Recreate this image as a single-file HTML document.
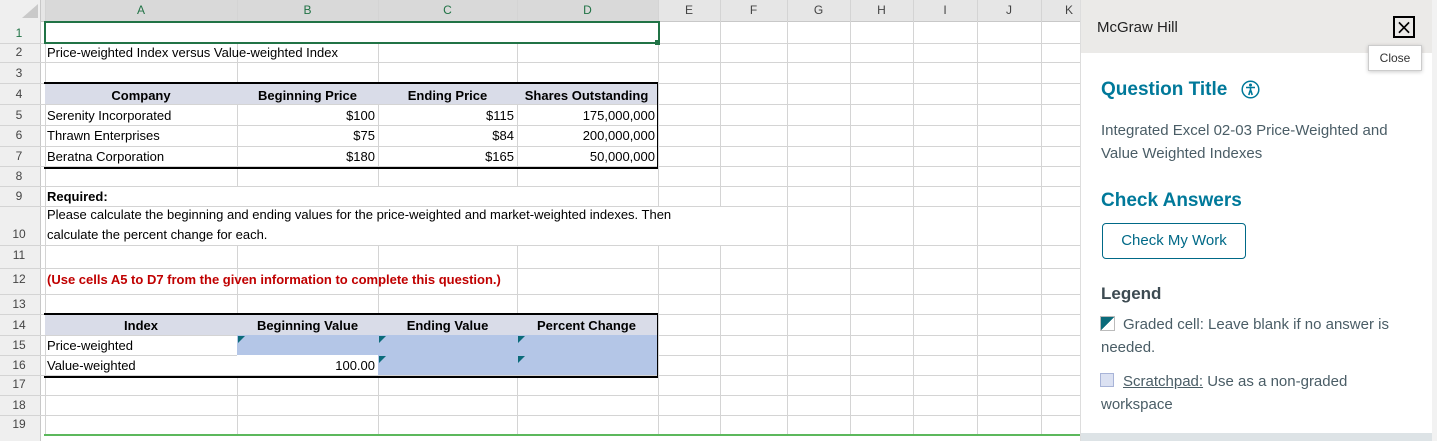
<!DOCTYPE html>
<html><head><meta charset="utf-8"><style>
body{margin:0;width:1437px;height:441px;overflow:hidden;background:#fff;position:relative;font-family:"Liberation Sans Narrow","Liberation Sans",sans-serif;font-size:13px;color:#000}
.a{position:absolute;white-space:nowrap}
.vl{position:absolute;top:0;width:1px;height:441px;background:#d4d4d4}
.hl{position:absolute;left:0;width:1080px;height:1px;background:#d4d4d4}
.ch{position:absolute;top:0;height:20px;line-height:20px;text-align:center;color:#444;font-size:12px}
.rh{position:absolute;left:0;width:38px;text-align:center;color:#444;font-size:12px}
.b{font-weight:bold}
.r{text-align:right}
.tri{position:absolute;width:0;height:0;border-top:7px solid #0b6b7a;border-right:7px solid transparent}
.p{font-family:"Liberation Sans",sans-serif}
</style></head><body>
<div class="a" style="left:0;top:0;width:1080px;height:21px;background:#e6e6e6;border-bottom:1px solid #c8c8c8"></div>
<div class="a" style="left:45px;top:0;width:613px;height:21px;background:#d9d9d9"></div>
<div class="a" style="left:0;top:0;width:40px;height:441px;background:#efefef;border-right:1px solid #c8c8c8"></div>
<div class="a" style="left:22px;top:4px;width:0;height:0;border-left:16px solid transparent;border-bottom:14px solid #c9c9c9"></div>
<div class="vl" style="left:45px"></div><div class="vl" style="left:237px"></div><div class="vl" style="left:378px"></div><div class="vl" style="left:517px"></div><div class="vl" style="left:658px"></div><div class="vl" style="left:720px"></div><div class="vl" style="left:787px"></div><div class="vl" style="left:850px"></div><div class="vl" style="left:913px"></div><div class="vl" style="left:977px"></div><div class="vl" style="left:1041px"></div>
<div class="ch" style="left:45px;width:192px;color:#217346">A</div><div class="ch" style="left:237px;width:141px;color:#217346">B</div><div class="ch" style="left:378px;width:139px;color:#217346">C</div><div class="ch" style="left:517px;width:141px;color:#217346">D</div><div class="ch" style="left:658px;width:62px">E</div><div class="ch" style="left:720px;width:67px">F</div><div class="ch" style="left:787px;width:63px">G</div><div class="ch" style="left:850px;width:63px">H</div><div class="ch" style="left:913px;width:64px">I</div><div class="ch" style="left:977px;width:64px">J</div><div class="ch" style="left:1041px;width:56px">K</div>
<div class="hl" style="top:43px"></div><div class="hl" style="top:62px"></div><div class="hl" style="top:83px"></div><div class="hl" style="top:104px"></div><div class="hl" style="top:125px"></div><div class="hl" style="top:146px"></div><div class="hl" style="top:166px"></div><div class="hl" style="top:186px"></div><div class="hl" style="top:206px"></div><div class="hl" style="top:245px"></div><div class="hl" style="top:268px"></div><div class="hl" style="top:294px"></div><div class="hl" style="top:314px"></div><div class="hl" style="top:335px"></div><div class="hl" style="top:355px"></div><div class="hl" style="top:375px"></div><div class="hl" style="top:395px"></div><div class="hl" style="top:415px"></div>
<div class="rh" style="top:26px;color:#217346">1</div><div class="rh" style="top:45px">2</div><div class="rh" style="top:66px">3</div><div class="rh" style="top:87px">4</div><div class="rh" style="top:108px">5</div><div class="rh" style="top:128px">6</div><div class="rh" style="top:149px">7</div><div class="rh" style="top:169px">8</div><div class="rh" style="top:189px">9</div><div class="rh" style="top:227px">10</div><div class="rh" style="top:248px">11</div><div class="rh" style="top:272px">12</div><div class="rh" style="top:297px">13</div><div class="rh" style="top:318px">14</div><div class="rh" style="top:338px">15</div><div class="rh" style="top:358px">16</div><div class="rh" style="top:377px">17</div><div class="rh" style="top:398px">18</div><div class="rh" style="top:417px">19</div>
<div class="a" style="left:44px;top:21px;width:612px;height:19px;border:2px solid #217346;background:#fff"></div>
<div class="a" style="left:655px;top:40px;width:5px;height:5px;background:#217346"></div>
<div class="a" style="left:47px;top:45px">Price-weighted Index versus Value-weighted Index</div>
<div class="a" style="left:45px;top:84px;width:613px;height:20px;background:#d9dce8"></div>
<div class="a" style="left:44px;top:82px;width:613px;height:83px;border:1px solid #000;border-width:2px 1px 2px 0"></div>
<div class="a b" style="left:45px;top:88px;width:192px;text-align:center">Company</div><div class="a b" style="left:237px;top:88px;width:141px;text-align:center">Beginning Price</div><div class="a b" style="left:378px;top:88px;width:139px;text-align:center">Ending Price</div><div class="a b" style="left:517px;top:88px;width:139px;text-align:center">Shares Outstanding</div>
<div class="a" style="left:47px;top:108px">Serenity Incorporated</div><div class="a r" style="left:237px;top:108px;width:138px">$100</div><div class="a r" style="left:378px;top:108px;width:136px">$115</div><div class="a r" style="left:517px;top:108px;width:138px">175,000,000</div>
<div class="a" style="left:47px;top:128px">Thrawn Enterprises</div><div class="a r" style="left:237px;top:128px;width:138px">$75</div><div class="a r" style="left:378px;top:128px;width:136px">$84</div><div class="a r" style="left:517px;top:128px;width:138px">200,000,000</div>
<div class="a" style="left:47px;top:149px">Beratna Corporation</div><div class="a r" style="left:237px;top:149px;width:138px">$180</div><div class="a r" style="left:378px;top:149px;width:136px">$165</div><div class="a r" style="left:517px;top:149px;width:138px">50,000,000</div>
<div class="a" style="left:46px;top:207px;width:694px;height:38px;background:#fff"></div>
<div class="a" style="left:46px;top:187px;width:611px;height:19px;background:#fff"></div>
<div class="a b" style="left:47px;top:189px">Required:</div>
<div class="a" style="left:47px;top:207px">Please calculate the beginning and ending values for the price-weighted and market-weighted indexes. Then</div>
<div class="a" style="left:47px;top:227px">calculate the percent change for each.</div>
<div class="a b" style="left:47px;top:272px;color:#c00000">(Use cells A5 to D7 from the given information to complete this question.)</div>
<div class="a" style="left:45px;top:315px;width:613px;height:20px;background:#d9dce8"></div>
<div class="a" style="left:237px;top:335px;width:421px;height:20px;background:#b4c6e7"></div>
<div class="a" style="left:378px;top:355px;width:280px;height:20px;background:#b4c6e7"></div>
<div class="a" style="left:237px;top:355px;width:141px;height:20px;background:#fff"></div>
<div class="a" style="left:44px;top:313px;width:613px;height:61px;border:1px solid #000;border-width:2px 1px 2px 0"></div>
<div class="tri" style="left:238px;top:336px"></div><div class="tri" style="left:379px;top:336px"></div><div class="tri" style="left:518px;top:336px"></div><div class="tri" style="left:379px;top:356px"></div><div class="tri" style="left:518px;top:356px"></div>
<div class="a b" style="left:45px;top:318px;width:192px;text-align:center">Index</div><div class="a b" style="left:237px;top:318px;width:141px;text-align:center">Beginning Value</div><div class="a b" style="left:378px;top:318px;width:139px;text-align:center">Ending Value</div><div class="a b" style="left:517px;top:318px;width:139px;text-align:center">Percent Change</div>
<div class="a" style="left:47px;top:338px">Price-weighted</div>
<div class="a" style="left:47px;top:358px">Value-weighted</div><div class="a r" style="left:237px;top:358px;width:138px">100.00</div>
<div class="a" style="left:44px;top:434px;width:1036px;height:7px;background:#fff;border-top:2px solid #5cb85c"></div>
<div class="a p" style="left:1080px;top:0;width:357px;height:441px;background:#fff;border-left:1px solid #ddd"></div>
<div class="a p" style="left:1081px;top:0;width:351px;height:53px;background:#ebeae8"></div>
<div class="a" style="left:1432px;top:0;width:5px;height:441px;background:#f2f2f2"></div>
<div class="a p" style="left:1097px;top:19px;font-size:15px;color:#222">McGraw Hill</div>
<div class="a" style="left:1393px;top:16px;width:18px;height:18px;border:2px solid #000;font:20px/18px 'DejaVu Sans',sans-serif;text-align:center;color:#000">×</div>
<div class="a p" style="left:1368px;top:45px;width:52px;height:24px;background:#fff;border:1px solid #ccc;box-shadow:0 1px 4px rgba(0,0,0,.2);font-size:12px;line-height:24px;text-align:center;color:#333">Close</div>
<div class="a p b" style="left:1101px;top:79px;font-size:19px;color:#00799a">Question Title</div>
<svg class="a" style="left:1241px;top:80px" width="19" height="19" viewBox="0 0 19 19"><circle cx="9.5" cy="9.5" r="8.3" fill="none" stroke="#00799a" stroke-width="1.5"/><circle cx="9.5" cy="5" r="1.5" fill="#00799a"/><path d="M5 7.5h9M9.5 7.5v4M7.8 15l1.2-4h1l1.2 4" stroke="#00799a" stroke-width="1.6" fill="none"/></svg>
<div class="a p" style="left:1101px;top:119px;font-size:15px;line-height:23px;color:#4a5d66">Integrated Excel 02-03 Price-Weighted and<br>Value Weighted Indexes</div>
<div class="a p b" style="left:1101px;top:190px;font-size:19px;color:#00799a">Check Answers</div>
<div class="a p" style="left:1102px;top:223px;width:142px;height:34px;border:1.5px solid #006987;border-radius:4px;font-size:15px;line-height:34px;text-align:center;color:#006987">Check My Work</div>
<div class="a p b" style="left:1101px;top:284px;font-size:17px;color:#3d4b52">Legend</div>
<div class="a" style="left:1100px;top:316px;width:13px;height:13px;border:1px solid #bbb;background:linear-gradient(135deg,#0b6b7a 50%,#fff 50%)"></div>
<div class="a p" style="left:1101px;top:313px;font-size:15px;line-height:23px;color:#4a5d66;white-space:normal;width:320px;text-indent:22px">Graded cell: Leave blank if no answer is needed.</div>
<div class="a" style="left:1100px;top:373px;width:12px;height:12px;border:1px solid #a8b4d8;background:#dbe1f2"></div>
<div class="a p" style="left:1101px;top:370px;font-size:15px;line-height:23px;color:#4a5d66;white-space:normal;width:320px;text-indent:22px"><u>Scratchpad:</u> Use as a non-graded workspace</div>
<div class="a" style="left:1081px;top:433px;width:351px;height:8px;background:#dde3e6"></div>
</body></html>
